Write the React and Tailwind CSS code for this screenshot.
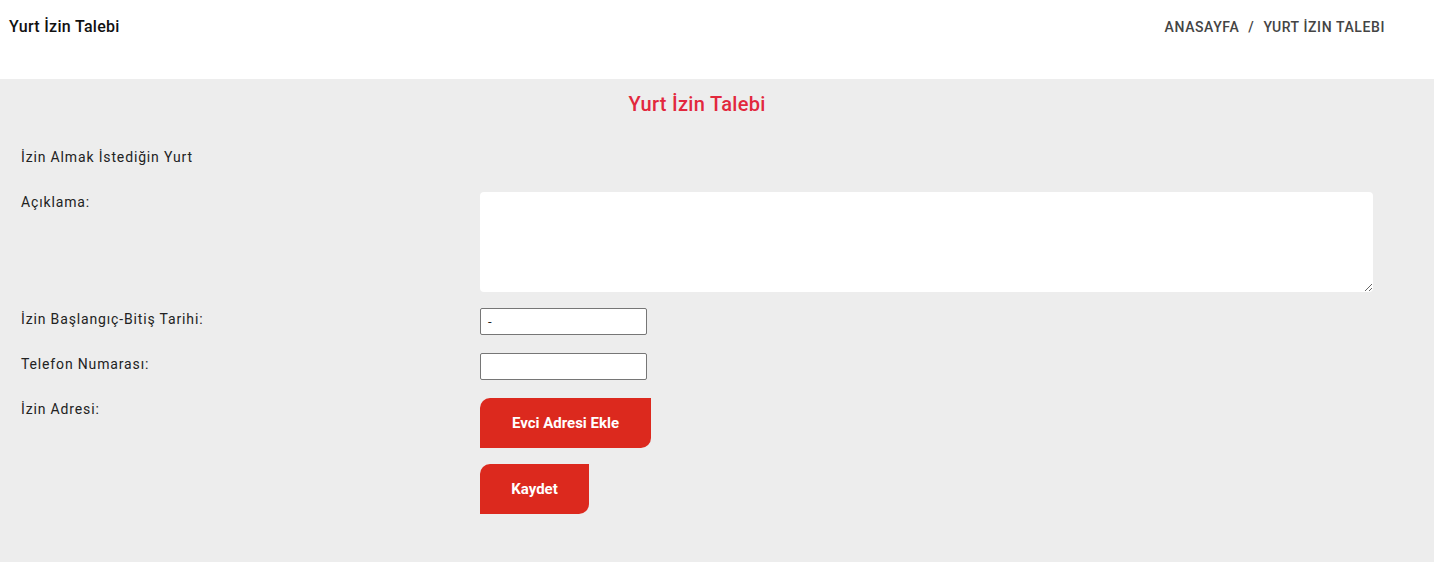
import React from 'react'

// Yurt izin talebi formu
const Label = ({ children }) => (
  <div className="w-[480px] shrink-0 pl-[21px] text-[14px] leading-[20px] tracking-[0.85px] text-[#222]">
    {children}
  </div>
)

const App = () => {
  return (
    <div className="min-h-[562px] bg-[#ededed] font-['Roboto',sans-serif]">
      {/* Üst bar */}
      <div className="flex h-[79px] items-start justify-between bg-white">
        <h1 className="pl-[9px] pt-[17px] text-[16px] font-medium leading-[20px] tracking-[0.3px] text-[#111]">
          Yurt İzin Talebi
        </h1>
        <div className="flex gap-[9px] pr-[49px] pt-[18px] text-[14px] font-medium leading-[18px] tracking-[0.6px] text-[#444]">
          <span>ANASAYFA</span>
          <span>/</span>
          <span>YURT İZIN TALEBI</span>
        </div>
      </div>

      {/* Form */}
      <div className="pb-[48px]">
        <h2 className="pr-[40px] pt-[12px] text-center text-[20px] font-medium leading-[26px] tracking-[0.3px] text-[#e2283d]">
          Yurt İzin Talebi
        </h2>

        <div className="mt-[30px] flex">
          <Label>İzin Almak İstediğin Yurt</Label>
        </div>

        <div className="mt-[25px] flex">
          <Label>Açıklama:</Label>
          <textarea className="h-[100px] w-[893px] rounded-[4px] bg-white outline-none" />
        </div>

        <div className="mt-[16px] flex">
          <div className="pt-[1px]">
            <Label>İzin Başlangıç-Bitiş Tarihi:</Label>
          </div>
          <div className="flex h-[27px] w-[167px] items-center rounded-[2px] border border-[#767676] bg-white pl-[7px] text-[13px] leading-none text-[#222]">
            -
          </div>
        </div>

        <div className="mt-[18px] flex">
          <div className="pt-[1px]">
            <Label>Telefon Numarası:</Label>
          </div>
          <input className="h-[27px] w-[167px] rounded-[2px] border border-[#767676] bg-white outline-none" />
        </div>

        <div className="mt-[18px] flex">
          <div className="pt-[1px]">
            <Label>İzin Adresi:</Label>
          </div>
          <div className="flex flex-col items-start gap-[16px]">
            <button className="h-[50px] w-[171px] rounded-tl-[10px] rounded-br-[10px] bg-[#dc291e] text-[15px] font-bold text-white">
              Evci Adresi Ekle
            </button>
            <button className="h-[50px] w-[109px] rounded-tl-[10px] rounded-br-[10px] bg-[#dc291e] text-[15px] font-bold text-white">
              Kaydet
            </button>
          </div>
        </div>
      </div>
    </div>
  )
}

export default App
